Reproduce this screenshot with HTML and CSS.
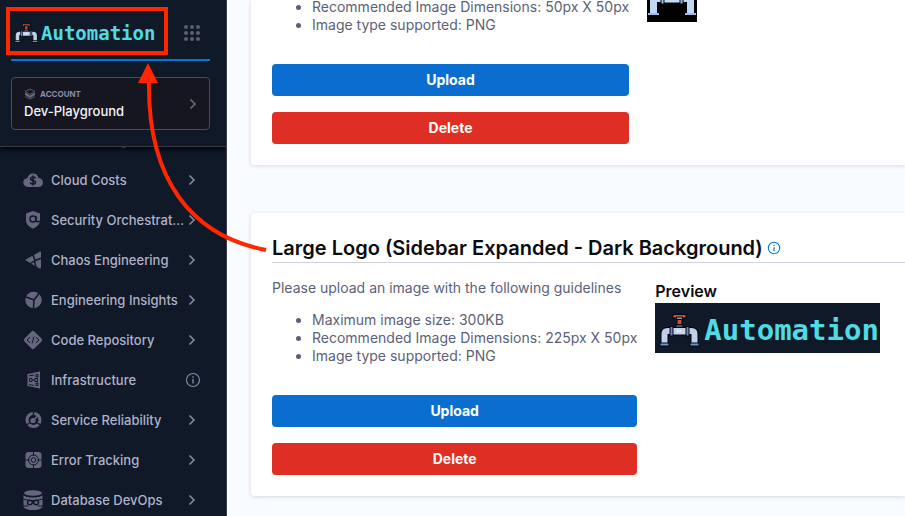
FILE: index.html
```html
<!DOCTYPE html>
<html lang="en">
<head>
<meta charset="utf-8">
<meta name="viewport" content="width=device-width, initial-scale=1">
<title>Automation</title>
<link rel="stylesheet" href="styles.css">
</head>
<body>
<svg class="defs" aria-hidden="true">
  <symbol id="chevron" viewBox="0 0 12 12"><path d="M3.5 1.5 8 6l-4.500 4.500" fill="none" stroke="currentColor" stroke-width="1.700"/></symbol>
  <symbol id="info" viewBox="0 0 16 16"><circle cx="8" cy="8" r="6.5" fill="none" stroke="currentColor" stroke-width="1.2"/><path d="M8 7v4.6M8 4.2v1.5" stroke="currentColor" stroke-width="1.4"/></symbol>
  <symbol id="valve" viewBox="0 0 40 34">
    <g class="outlined" stroke="#05070c" stroke-width="2">
      <path d="M18.500 5h4v8h-4z" fill="#d9492c"/>
      <path d="M14.500 2h12v2.500h-12z" fill="#e2502f"/>
      <path d="M18 4.500h5v1.500h-5z" fill="#7f9bd0"/>
      <path d="M17.500 12h6v3h-6z" fill="#4c5668"/>
      <path d="M2.500 31V21q0-6 6-6H13v6H8.500v10zM38.500 31V21q0-6-6-6H28v6h4.500v10z" fill="#bfd0ea"/>
      <path d="M12 15h17v6.500H12z" fill="#c5d4ee"/>
      <path d="M11.500 14h2v8.500h-2zM27.500 14h2v8.500h-2z" fill="#6d86bb"/>
      <path d="M1.500 30.500h8v2h-8zM31.500 30.500h8v2h-8z" fill="#6f8fd6"/>
    </g>
    <path d="M18 18h1.500M20.500 18H22" stroke="#fff" stroke-width="1.500"/>
  </symbol>
</svg>

<div class="app">
  <aside class="sidebar">
    <header class="side-head">
      <div class="brand">
        <a class="logo logo-small" href="#"><svg viewBox="0 0 40 34" aria-hidden="true"><use href="#valve"/></svg><span>Automation</span></a>
        <button class="grid-btn" type="button" aria-label="Modules">
          <svg viewBox="0 0 18 18" fill="currentColor"><circle cx="3" cy="3" r="2"/><circle cx="9" cy="3" r="2"/><circle cx="15" cy="3" r="2"/><circle cx="3" cy="9" r="2"/><circle cx="9" cy="9" r="2"/><circle cx="15" cy="9" r="2"/><circle cx="3" cy="15" r="2"/><circle cx="9" cy="15" r="2"/><circle cx="15" cy="15" r="2"/></svg>
        </button>
      </div>
      <button class="account" type="button">
        <span class="account-text">
          <span class="account-label"><svg viewBox="0 0 12 12" fill="currentColor" aria-hidden="true"><path d="M6 1 11 3.500 6 6.500 1 3.500z" fill="none" stroke="currentColor" stroke-width=".8"/><path d="M1 4.500 6 7.500l5-3v2.500L6 10 1 7z"/><path d="m1 8.500 5 2.500 5-2.500" fill="none" stroke="currentColor" stroke-width=".8"/></svg>ACCOUNT</span>
          <span class="account-name">Dev-Playground</span>
        </span>
        <svg class="chev" aria-hidden="true"><use href="#chevron"/></svg>
      </button>
    </header>
    <nav class="nav">
      <a href="#"><svg class="ico" viewBox="0 0 20 20"><path d="M4 3h11l2 6-7 8-7-8z" fill="currentColor"/></svg><span>Feature Flags</span><svg class="chev"><use href="#chevron"/></svg></a>
      <a href="#"><svg class="ico" viewBox="0 0 20 20"><path d="M5 17A4.500 4.500 0 0 1 4.500 8Q5.500 3.500 10 3.500T15.500 8A4.500 4.500 0 0 1 15.500 17z" fill="currentColor"/><path d="M12.500 8.500Q12 7 10 7T7.500 8.700Q7.500 10 10 10.500T12.500 12.500Q12.500 14 10 14T7.400 12.500M10 5.500v10" class="cut"/></svg><span>Cloud Costs</span><svg class="chev"><use href="#chevron"/></svg></a>
      <a href="#"><svg class="ico" viewBox="0 0 20 20"><path d="m10 1 7 2.500V10q0 5.500-7 8.700Q3 15.500 3 10V3.500z" fill="currentColor"/><circle cx="10" cy="9" r="3" class="cut"/><path d="M13 6v4.500q.5 1.500 2 1h2.500" class="cut"/></svg><span>Security Orchestrat...</span><svg class="chev"><use href="#chevron"/></svg></a>
      <a href="#"><svg class="ico" viewBox="0 0 20 20"><path d="M2 10 17 1.500q1.500 0 1 2V17q0 2-1.500 1.500z" fill="currentColor"/><path d="m10 5 2 5.500-4.500 3M12 10.500l7-2.500M11.500 11l1.500 6.500" class="cut"/></svg><span>Chaos Engineering</span><svg class="chev"><use href="#chevron"/></svg></a>
      <a href="#"><svg class="ico" viewBox="0 0 20 20"><circle cx="10.500" cy="10" r="8.200" fill="currentColor"/><path d="M2 6.500 11 10l5-6.500M11 10l-.5 8.500" class="cut"/></svg><span>Engineering Insights</span><svg class="chev"><use href="#chevron"/></svg></a>
      <a href="#"><svg class="ico" viewBox="0 0 20 20"><rect x="3" y="3" width="14" height="14" rx="2" transform="rotate(45 10 10)" fill="currentColor"/><path d="M7 7.200 4 10l3 2.800M13 7.200l3 2.800-3 2.800M11 6.500 9 13.500" class="cut thin"/></svg><span>Code Repository</span><svg class="chev"><use href="#chevron"/></svg></a>
      <a href="#"><svg class="ico" viewBox="0 0 20 20"><path d="m4.500 4 12.500-2.500v17L4.500 16z" fill="currentColor"/><path d="M6 5.800 11 5M6 14.500l5 1M13 4.500h2V7h-2zM13 13h2v2.500h-2zM6.500 8.500H9v3H6.500zM12 8.500h2.500v3H12zM9 10h3" class="cut thin"/></svg><span>Infrastructure</span><svg class="info"><use href="#info"/></svg></a>
      <a href="#"><svg class="ico" viewBox="0 0 20 20"><circle cx="10.500" cy="10" r="8" fill="currentColor"/><circle cx="10.500" cy="10" r="4.200" class="cut solid"/><circle cx="10" cy="10.500" r="2.600" fill="currentColor"/><path d="m10 11 4.500-5" stroke="currentColor" stroke-width="1.500"/><path d="M10.500 2v3M3.500 15l3-2M17.500 15l-3-2" class="cut"/></svg><span>Service Reliability</span><svg class="chev"><use href="#chevron"/></svg></a>
      <a href="#"><svg class="ico" viewBox="0 0 20 20"><rect x="2.500" y="2" width="16" height="16" rx="3" fill="currentColor"/><circle cx="10.500" cy="10" r="5" class="cut thin"/><circle cx="10.500" cy="10" r="2.300" class="cut thin"/><path d="M10.500 2v4M10.500 14v4M2.500 10h4M14.500 10h4" class="cut thin"/></svg><span>Error Tracking</span><svg class="chev"><use href="#chevron"/></svg></a>
      <a href="#"><svg class="ico" viewBox="0 0 20 20"><ellipse cx="10" cy="3" rx="9" ry="2.800" fill="currentColor"/><path d="M.5 5q2 2.300 9.500 2.300T19.500 5v12q-2 3-9.500 3T.5 17z" fill="currentColor"/><path d="M.5 4.500q2 2.300 9.500 2.300t9.500-2.300" class="cut thin"/><path d="M10 12.500c-2-3-5.500-3-5.500 0s3.500 3 5.500 0 5.500-3 5.500 0-3.500 3-5.500 0" class="cut"/><path d="M0 9q5 1.500 10 1.500T20 9M0 16h5M15 16h5" class="cut thin"/></svg><span>Database DevOps</span><svg class="chev"><use href="#chevron"/></svg></a>
    </nav>
  </aside>

  <main class="content">
    <section class="card card-first">
      <div class="form">
        <ul>
          <li>Recommended Image Dimensions: 50px X 50px</li>
          <li>Image type supported: PNG</li>
        </ul>
        <button class="btn upload" type="button">Upload</button>
        <button class="btn delete" type="button">Delete</button>
      </div>
      <div class="preview">
        <svg class="icon-preview" viewBox="0 0 50 50" role="img" aria-label="Small logo">
          <path d="M0 0h50v50H0z" fill="#000"/>
          <path d="M3 41V29q0-8 8-8h5v9h-6v11zM47 41V29q0-8-8-8h-5v9h6v11z" fill="#bfd9f4"/>
          <path d="M16 20h18v11H16z" fill="#c3dbf4" stroke="#05070c"/>
          <path d="M14 18h3v14h-3zM33 18h3v14h-3z" fill="#9ab9e5" stroke="#05070c"/>
          <path d="M1 41h11v2H1zM38 41h11v2H38z" fill="#9ab9ee"/>
        </svg>
      </div>
    </section>

    <section class="card">
      <h2>Large Logo (Sidebar Expanded - Dark Background)<svg aria-hidden="true"><use href="#info"/></svg></h2>
      <div class="form">
        <p>Please upload an image with the following guidelines</p>
        <ul>
          <li>Maximum image size: 300KB</li>
          <li>Recommended Image Dimensions: 225px X 50px</li>
          <li>Image type supported: PNG</li>
        </ul>
        <button class="btn upload" type="button">Upload</button>
        <button class="btn delete" type="button">Delete</button>
      </div>
      <div class="preview">
        <h3>Preview</h3>
        <div class="logo logo-large"><svg viewBox="0 0 40 34" aria-hidden="true"><use href="#valve"/></svg><span>Automation</span></div>
      </div>
    </section>
  </main>
</div>

<div class="callout"></div>
<svg class="arrow" viewBox="0 0 280 260" aria-hidden="true">
  <path d="M266 250C192 236 147 180 149 80" fill="none" stroke="#ff2600" stroke-width="4"/>
  <path d="m148 63 10 20h-20z" fill="#ff2600"/>
</svg>
</body>
</html>
```
FILE: styles.css
```css
* { box-sizing: border-box; }

body {
  margin: 0;
  font-family: Inter, "Liberation Sans", sans-serif;
  font-size: 14px;
  line-height: 18px;
  color: #5c5f78;
}

button {
  font: inherit;
  border: 0;
  cursor: pointer;
}

a { text-decoration: none; }

.defs { display: none; }

.outlined path { paint-order: stroke; }

.app {
  display: flex;
  height: 100vh;
  overflow: hidden;
}

.sidebar {
  flex: 0 0 227px;
  overflow: hidden;
  background: #0f1928;
  border-right: 1px solid #3b3c4c;
}

.side-head {
  position: relative;
  z-index: 1;
  height: 147px;
  padding: 0 16px 0 11px;
  background: #0f1928;
  border-bottom: 1px solid #383946;
  box-shadow: 0 2px 5px #000;
}

.brand {
  display: flex;
  align-items: center;
  justify-content: space-between;
  height: 61px;
  padding: 6px 9px 0 3px;
  border-bottom: 2px solid #0278d5;
}

.logo {
  display: flex;
  align-items: center;
  color: #4fdbe4;
  font-family: "DejaVu Sans Mono", monospace;
  font-weight: bold;
}

.logo-small {
  gap: 3px;
  font-size: 19px;
}

.logo-small svg {
  width: 24px;
  height: 20px;
}

.logo-large {
  width: 225px;
  height: 50px;
  padding: 4px 0 0 4px;
  gap: 5px;
  font-size: 29px;
  background: #0f1928;
}

.logo-large svg {
  flex: none;
  width: 40px;
  height: 34px;
}

.grid-btn {
  padding: 0;
  background: none;
  color: #5d5f74;
}

.grid-btn svg {
  display: block;
  width: 18px;
  height: 18px;
}

.account {
  display: flex;
  align-items: center;
  justify-content: space-between;
  width: 100%;
  height: 53px;
  margin-top: 16px;
  padding: 0 10px 0 12px;
  text-align: left;
  color: #6b6d85;
  background: #161620;
  border: 1px solid #4a4b5c;
  border-radius: 4px;
}

.account-label {
  display: flex;
  align-items: center;
  gap: 4px;
  font-size: 8px;
  line-height: 14px;
  font-weight: 700;
  color: #8c8da8;
}

.account-label svg {
  width: 12px;
  height: 12px;
  color: #66687e;
}

.account-name {
  display: block;
  line-height: 20px;
  font-size: 13px;
  font-weight: 500;
  color: #f3f3fa;
}

.nav {
  margin-top: -27px;
}

.nav a {
  display: flex;
  align-items: center;
  height: 40px;
  padding: 0 28px 0 23px;
  font-size: 13px;
  font-weight: 500;
  color: #b0b1c8;
}

.nav span {
  flex: 1;
  white-space: nowrap;
}

.ico {
  width: 20px;
  height: 20px;
  margin-right: 8px;
  color: #66677f;
}

.cut {
  fill: none;
  stroke: #0f1928;
  stroke-width: 1.5px;
}

.thin { stroke-width: 1px; }

.solid { fill: #0f1928; }

.chev {
  width: 12px;
  height: 12px;
  color: #8586a0;
}

.account .chev { color: #66687e; }

.nav .info {
  width: 16px;
  height: 16px;
  margin-right: -3px;
  color: #8586a0;
}

.content {
  flex: 1;
  min-width: 0;
  display: flex;
  flex-direction: column;
  justify-content: flex-end;
  gap: 48px;
  padding: 0 0 20px 24px;
  background: #f8fbff;
}

.card {
  display: grid;
  grid-template-columns: max-content 1fr;
  column-gap: 18px;
  padding: 23px 0 21px 21px;
  background: #fff;
  border-radius: 4px 0 0 4px;
  box-shadow: 0 1px 4px rgba(40, 41, 61, 0.16);
}

.card-first { padding-top: 0; }

.card-first .icon-preview {
  display: block;
  width: 50px;
  height: 50px;
  margin-top: -26px;
}

h2 {
  grid-column: 1 / -1;
  display: flex;
  align-items: center;
  gap: 4px;
  margin: 0 0 16px;
  padding-bottom: 2px;
  line-height: 24px;
  font-size: 20px;
  font-weight: 600;
  color: #0b0b0d;
  border-bottom: 1px solid #d0d1e0;
}

h2 svg {
  width: 14px;
  height: 14px;
  color: #0278d5;
}

h3 {
  margin: 3px 0;
  font-size: 16px;
  font-weight: 600;
  color: #0b0b0d;
}

p { margin: 0 0 14px; }

ul {
  margin: 0 0 30px;
  padding-left: 40px;
}

.btn {
  display: block;
  width: 100%;
  height: 32px;
  font-weight: 700;
  color: #fff;
  border-radius: 4px;
}

.upload {
  margin-bottom: 16px;
  background: #0a6ed1;
}

.delete { background: #df2e23; }

.callout {
  position: absolute;
  z-index: 2;
  top: 7px;
  left: 6px;
  width: 162px;
  height: 48px;
  border: 4px solid #ff2600;
}

.arrow {
  position: absolute;
  z-index: 2;
  top: 0;
  left: 0;
  width: 280px;
  height: 260px;
  pointer-events: none;
}
```
